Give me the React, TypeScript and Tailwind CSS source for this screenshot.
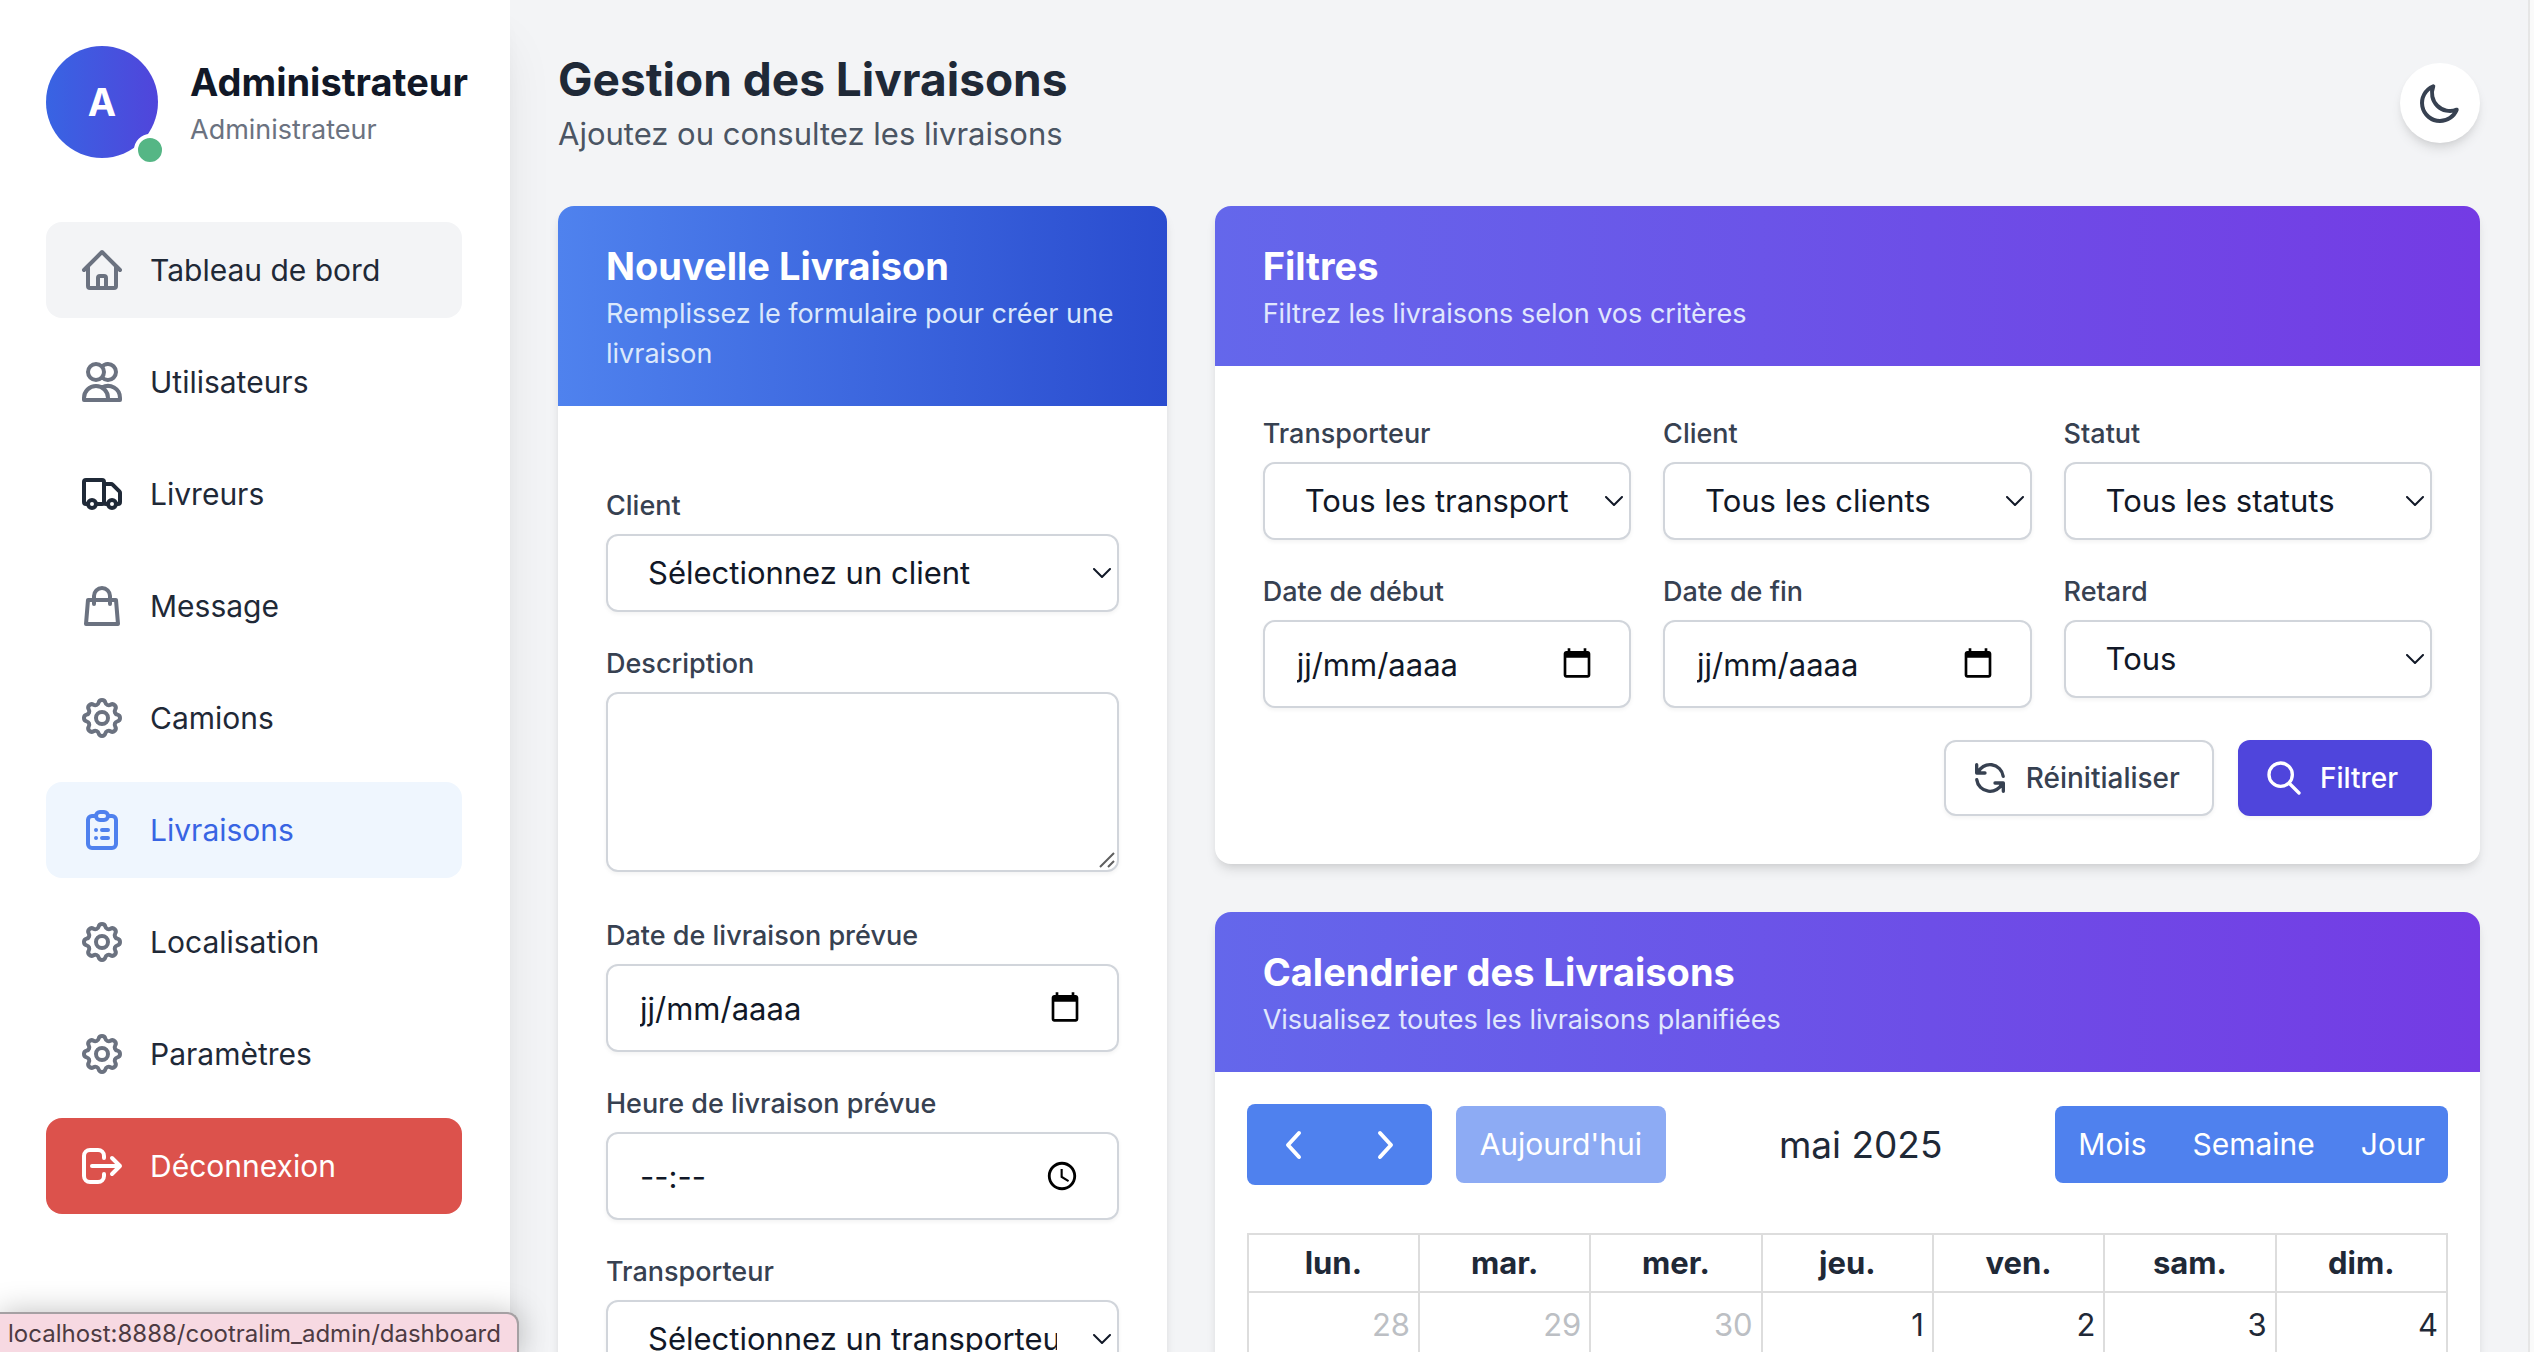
import React from 'react';

const HOME = 'M3 12l2-2m0 0l7-7 7 7M5 10v10a1 1 0 001 1h3m10-11l2 2m-2-2v10a1 1 0 01-1 1h-3m-6 0a1 1 0 001-1v-4a1 1 0 011-1h2a1 1 0 011 1v4a1 1 0 001 1m-6 0h6';
const USERS = 'M12 4.354a4 4 0 110 5.292M15 21H3v-1a6 6 0 0112 0v1zm0 0h6v-1a6 6 0 00-9-5.197M13 7a4 4 0 11-8 0 4 4 0 018 0z';
const TRUCK = 'M13 16V6a1 1 0 00-1-1H4a1 1 0 00-1 1v10a1 1 0 001 1h1m8-1a1 1 0 01-1 1H9m4-1V8a1 1 0 011-1h2.586a1 1 0 01.707.293l3.414 3.414a1 1 0 01.293.707V16a1 1 0 01-1 1h-1m-6-1a1 1 0 001 1h1M5 17a2 2 0 104 0m-4 0a2 2 0 114 0m6 0a2 2 0 104 0m-4 0a2 2 0 114 0';
const BAG = 'M16 11V7a4 4 0 00-8 0v4M5 9h14l1 12H4L5 9z';
const COG = 'M10.325 4.317c.426-1.756 2.924-1.756 3.35 0a1.724 1.724 0 002.573 1.066c1.543-.94 3.31.826 2.37 2.37a1.724 1.724 0 001.065 2.572c1.756.426 1.756 2.924 0 3.35a1.724 1.724 0 00-1.066 2.573c.94 1.543-.826 3.31-2.37 2.37a1.724 1.724 0 00-2.572 1.065c-.426 1.756-2.924 1.756-3.35 0a1.724 1.724 0 00-2.573-1.066c-1.543.94-3.31-.826-2.37-2.37a1.724 1.724 0 00-1.065-2.572c-1.756-.426-1.756-2.924 0-3.35a1.724 1.724 0 001.066-2.573c-.94-1.543.826-3.31 2.37-2.37.996.608 2.296.07 2.572-1.065zM15 12a3 3 0 11-6 0 3 3 0 016 0z';
const CLIPBOARD = 'M9 5H7a2 2 0 00-2 2v12a2 2 0 002 2h10a2 2 0 002-2V7a2 2 0 00-2-2h-2M9 5a2 2 0 002 2h2a2 2 0 002-2M9 5a2 2 0 012-2h2a2 2 0 012 2m-3 7h3m-3 4h3m-6-4h.01M9 16h.01';
const LOGOUT = 'M17 16l4-4m0 0l-4-4m4 4H7m6 4v1a3 3 0 01-3 3H6a3 3 0 01-3-3V7a3 3 0 013-3h4a3 3 0 013 3v1';
const MOON = 'M20.354 15.354A9 9 0 018.646 3.646 9.003 9.003 0 0012 21a9.003 9.003 0 008.354-5.646z';
const REFRESH = 'M4 4v5h.582m15.356 2A8.001 8.001 0 004.582 9m0 0H9m11 11v-5h-.581m0 0a8.003 8.003 0 01-15.357-2m15.357 2H15';
const SEARCH = 'M21 21l-6-6m2-5a7 7 0 11-14 0 7 7 0 0114 0z';

function Icon({ d, className }: { d: string; className: string }) {
  return (
    <svg viewBox="0 0 24 24" fill="none" stroke="currentColor" strokeWidth={2} strokeLinecap="round" strokeLinejoin="round" className={className} aria-hidden="true">
      <path d={d} />
    </svg>
  );
}

const navItems = [
  { label: 'Tableau de bord', icon: HOME, row: 'bg-[#f3f4f6] text-[#1f2937]', tint: 'text-[#6b7280]' },
  { label: 'Utilisateurs', icon: USERS, row: 'text-[#1f2937]', tint: 'text-[#6b7280]' },
  { label: 'Livreurs', icon: TRUCK, row: 'text-[#1f2937]', tint: 'text-[#1f2937]' },
  { label: 'Message', icon: BAG, row: 'text-[#1f2937]', tint: 'text-[#6b7280]' },
  { label: 'Camions', icon: COG, row: 'text-[#1f2937]', tint: 'text-[#6b7280]' },
  { label: 'Livraisons', icon: CLIPBOARD, row: 'bg-[#eff6fe] text-[#3864e3]', tint: 'text-[#4f81ee]' },
  { label: 'Localisation', icon: COG, row: 'text-[#1f2937]', tint: 'text-[#6b7280]' },
  { label: 'Paramètres', icon: COG, row: 'text-[#1f2937]', tint: 'text-[#6b7280]' },
  { label: 'Déconnexion', icon: LOGOUT, row: 'bg-[#dc524c] text-white', tint: 'text-white' },
];

function Sidebar() {
  return (
    <aside className="relative z-10 w-[510px] shrink-0 bg-white py-[46px] pr-12 pl-[46px] shadow-[0_40px_50px_-10px_rgba(0,0,0,0.1),0_16px_20px_-12px_rgba(0,0,0,0.1)]">
      <div className="flex items-center gap-8">
        <div className="relative flex size-28 shrink-0 items-center justify-center rounded-full bg-linear-to-r/srgb from-[#3864e3] to-[#5045db] text-[38px] font-bold text-white">
          A
          <span className="absolute -right-2 -bottom-2 size-8 rounded-full border-4 border-white bg-[#55b685]" />
        </div>
        <div className="whitespace-nowrap">
          <p className="text-[38px] leading-14 font-bold text-[#111827]">Administrateur</p>
          <p className="text-[27px] leading-10 text-[#6b7280]">Administrateur</p>
        </div>
      </div>
      <nav className="mt-16 flex flex-col gap-4">
        {navItems.map((item) => (
          <a key={item.label} href="#" className={`flex h-24 items-center gap-6 rounded-2xl px-8 text-[30px] ${item.row}`}>
            <Icon d={item.icon} className={`size-12 shrink-0 ${item.tint}`} />
            {item.label}
          </a>
        ))}
      </nav>
    </aside>
  );
}

const control = 'block w-full rounded-xl border-2 border-[#d1d5db] bg-white text-[31px] text-[#111827] shadow-[0_2px_4px_rgba(0,0,0,0.05)]';

function Label({ id, children }: { id: string; children: React.ReactNode }) {
  return (
    <label htmlFor={id} className="mb-2 block text-[27px] leading-10 font-medium text-[#374151]">
      {children}
    </label>
  );
}

function SelectField({ id, label, option }: { id: string; label: string; option: string }) {
  return (
    <div>
      <Label id={id}>{label}</Label>
      <div className="relative">
        <select id={id} className={`${control} h-[78px] appearance-none pr-15 pl-10`}>
          <option>{option}</option>
        </select>
        <svg viewBox="0 0 18 10" fill="none" stroke="#111827" strokeWidth={2} strokeLinecap="round" strokeLinejoin="round" className="pointer-events-none absolute top-[34px] right-2 h-[10px] w-[18px]" aria-hidden="true">
          <path d="M1 1l8 8 8-8" />
        </svg>
      </div>
    </div>
  );
}

function PickerField({ id, label, kind }: { id: string; label: string; kind: 'date' | 'time' }) {
  return (
    <div>
      <Label id={id}>{label}</Label>
      <div className="relative">
        <input id={id} type="text" placeholder={kind === 'date' ? 'jj/mm/aaaa' : '--:--'} className={`${control} h-[88px] px-8 placeholder:text-[#111827]`} />
        {kind === 'date' ? (
          <svg viewBox="0 0 24 24" fill="#000" className="pointer-events-none absolute top-[27px] right-[38px] size-8" aria-hidden="true">
            <path d="M20 3h-1V1h-2v2H7V1H5v2H4c-1.1 0-2 .9-2 2v16c0 1.1.9 2 2 2h16c1.1 0 2-.9 2-2V5c0-1.1-.9-2-2-2zm0 18H4V8h16v13z" />
          </svg>
        ) : (
          <svg viewBox="0 0 24 24" fill="#000" className="pointer-events-none absolute top-[27px] right-10 size-[34px]" aria-hidden="true">
            <path d="M11.99 2C6.47 2 2 6.48 2 12s4.47 10 9.99 10C17.52 22 22 17.52 22 12S17.52 2 11.99 2zM12 20c-4.42 0-8-3.58-8-8s3.58-8 8-8 8 3.58 8 8-3.58 8-8 8zm.5-13H11v6l5.25 3.15.75-1.23-4.5-2.67z" />
          </svg>
        )}
      </div>
    </div>
  );
}

function Card({ title, subtitle, head, tint, children }: { title: string; subtitle: string; head: string; tint: string; children: React.ReactNode }) {
  return (
    <section className="rounded-2xl bg-white shadow-[0_8px_12px_-2px_rgba(0,0,0,0.1),0_4px_8px_-4px_rgba(0,0,0,0.1)]">
      <header className={`rounded-t-2xl px-12 py-8 ${head}`}>
        <h2 className="text-[38px] leading-14 font-bold text-white">{title}</h2>
        <p className={`text-[27px] leading-10 ${tint}`}>{subtitle}</p>
      </header>
      {children}
    </section>
  );
}

const violetHead = 'bg-linear-to-r/srgb from-[#6467eb] to-[#743be4]';
const days = ['lun.', 'mar.', 'mer.', 'jeu.', 'ven.', 'sam.', 'dim.'];
const weeks = [
  [28, 29, 30, 1, 2, 3, 4],
];

function Calendar() {
  return (
    <div className="p-8">
      <div className="flex items-center justify-between">
        <div className="flex items-center gap-6">
          <div className="flex h-[81px] items-stretch overflow-hidden rounded-lg bg-[#4f81ee] text-white">
            <button type="button" aria-label="Précédent" className="flex w-[93px] items-center justify-center">
              <svg viewBox="0 0 18 30" fill="none" stroke="currentColor" strokeWidth={4} strokeLinecap="round" strokeLinejoin="round" className="h-[30px] w-[18px]">
                <path d="M15 3L4 15l11 12" />
              </svg>
            </button>
            <button type="button" aria-label="Suivant" className="flex w-[92px] items-center justify-center">
              <svg viewBox="0 0 18 30" fill="none" stroke="currentColor" strokeWidth={4} strokeLinecap="round" strokeLinejoin="round" className="h-[30px] w-[18px]">
                <path d="M3 3l11 12L3 27" />
              </svg>
            </button>
          </div>
          <button type="button" className="h-[77px] rounded-lg bg-[#8dabf4] px-6 text-[30px] text-white">Aujourd'hui</button>
        </div>
        <h3 className="text-[37px] text-[#1f2937]">mai 2025</h3>
        <div className="flex h-[77px] rounded-lg bg-[#4f81ee] text-[30px] text-white">
          <button type="button" className="px-[23px]">Mois</button>
          <button type="button" className="px-[23px]">Semaine</button>
          <button type="button" className="px-[23px]">Jour</button>
        </div>
      </div>
      <table className="mt-12 w-full table-fixed border-collapse border-2 border-[#dddddd] text-[31px] text-[#1f2937]">
        <thead>
          <tr>
            {days.map((day) => (
              <th key={day} scope="col" className="h-[58px] border-2 border-[#dddddd] p-0 font-bold">{day}</th>
            ))}
          </tr>
        </thead>
        <tbody>
          {weeks.map((week) => (
            <tr key={week[0]}>
              {week.map((day) => (
                <td key={day} className={`h-48 border-2 border-[#dddddd] px-2 pt-3 text-right align-top leading-10 ${day > 27 ? 'text-[#bcbfc4]' : ''}`}>{day}</td>
              ))}
            </tr>
          ))}
        </tbody>
      </table>
    </div>
  );
}

export default function App() {
  return (
    <div className="relative flex h-screen overflow-hidden bg-[#f3f4f6] font-['Inter','Liberation_Sans',sans-serif]">
      <Sidebar />
      <main className="min-w-0 flex-1 overflow-hidden px-12 pt-12">
        <div className="mb-12 flex items-center justify-between">
          <div>
            <h1 className="text-[46px] leading-[62px] font-bold text-[#1f2937]">Gestion des Livraisons</h1>
            <p className="text-[31px] leading-12 text-[#4b5563]">Ajoutez ou consultez les livraisons</p>
          </div>
          <button type="button" aria-label="Changer de thème" className="rounded-full bg-white p-4 text-[#374151] shadow-[0_8px_12px_-2px_rgba(0,0,0,0.1),0_4px_8px_-4px_rgba(0,0,0,0.1)]">
            <Icon d={MOON} className="size-12" />
          </button>
        </div>
        <div className="grid grid-cols-3 items-start gap-12">
          <Card title="Nouvelle Livraison" subtitle="Remplissez le formulaire pour créer une livraison" head="bg-linear-to-r/srgb from-[#4f82ee] to-[#2a4ccf]" tint="text-[#dbe8fb]">
            <form className="flex flex-col gap-8 px-12 pt-20 pb-12">
              <SelectField id="client" label="Client" option="Sélectionnez un client" />
              <div className="pb-3">
                <Label id="description">Description</Label>
                <div className="relative">
                  <textarea id="description" className={`${control} h-[180px] resize-none px-8 py-4`} />
                  <svg viewBox="0 0 16 16" fill="none" stroke="#5f5f5f" strokeWidth={2} className="pointer-events-none absolute right-1 bottom-1 size-4" aria-hidden="true">
                    <path d="M1 15L15 1M9 15l6-6" />
                  </svg>
                </div>
              </div>
              <PickerField id="date" label="Date de livraison prévue" kind="date" />
              <PickerField id="heure" label="Heure de livraison prévue" kind="time" />
              <SelectField id="transporteur" label="Transporteur" option="Sélectionnez un transporteur" />
            </form>
          </Card>
          <div className="col-span-2 flex flex-col gap-12">
            <Card title="Filtres" subtitle="Filtrez les livraisons selon vos critères" head={violetHead} tint="text-[#e0e7fd]">
              <form className="p-12">
                <div className="grid grid-cols-3 gap-8">
                  <SelectField id="f-transporteur" label="Transporteur" option="Tous les transporteurs" />
                  <SelectField id="f-client" label="Client" option="Tous les clients" />
                  <SelectField id="f-statut" label="Statut" option="Tous les statuts" />
                  <PickerField id="f-debut" label="Date de début" kind="date" />
                  <PickerField id="f-fin" label="Date de fin" kind="date" />
                  <SelectField id="f-retard" label="Retard" option="Tous" />
                </div>
                <div className="mt-8 flex justify-end gap-6 text-[28px] font-medium">
                  <button type="reset" className="flex h-[76px] items-center gap-4 rounded-xl border-2 border-[#d1d5db] bg-white pr-8 pl-6 text-[#374151] shadow-[0_2px_4px_rgba(0,0,0,0.05)]">
                    <Icon d={REFRESH} className="size-10" />
                    Réinitialiser
                  </button>
                  <button type="button" className="flex h-[76px] items-center gap-4 rounded-xl border-2 border-[#4f45dc] bg-[#4f45dc] pr-8 pl-6 text-white shadow-[0_2px_4px_rgba(0,0,0,0.05)]">
                    <Icon d={SEARCH} className="size-10" />
                    Filtrer
                  </button>
                </div>
              </form>
            </Card>
            <Card title="Calendrier des Livraisons" subtitle="Visualisez toutes les livraisons planifiées" head={violetHead} tint="text-[#e0e7fd]">
              <Calendar />
            </Card>
          </div>
        </div>
      </main>
      <div className="w-[6px] shrink-0 border-l-2 border-[#e6e6e6] bg-[#fafafa]" />
      <div className="absolute bottom-0 left-0 z-20 h-10 rounded-tr-xl border-t-2 border-r-2 border-[#a5a0a3] bg-[#f7d9e2] pr-4 pl-2 text-[24px] leading-10 text-[#4d3b42] shadow-[0_0_30px_rgba(0,0,0,0.25)]">
        localhost:8888/cootralim_admin/dashboard
      </div>
    </div>
  );
}
